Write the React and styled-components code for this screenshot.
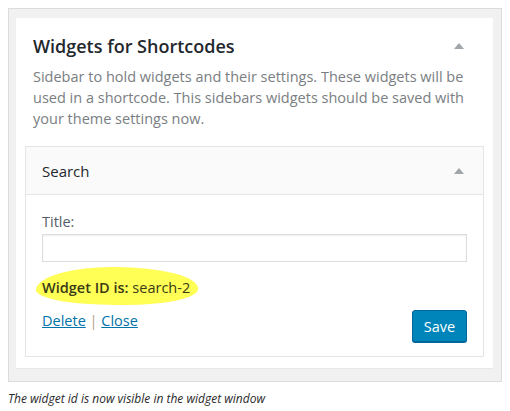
import React from "react";
import styled, { createGlobalStyle } from "styled-components";

const GlobalStyle = createGlobalStyle`
  body {
    margin: 8px;
    background: #ffffff;
    font-family: "Open Sans", "Liberation Sans", sans-serif;
  }
`;

const Frame = styled.div`
  width: 494px;
  box-sizing: border-box;
  border: 1px solid #dcdcdc;
  background: #f1f1f1;
  padding: 9px 8px 13px 7px;
`;

const Panel = styled.div`
  background: #ffffff;
  padding: 14px 9px 11px 9px;
  box-shadow: 0 1px 1px rgba(0, 0, 0, 0.04);
`;

const PanelHead = styled.div`
  display: flex;
  align-items: center;
  justify-content: space-between;
  padding: 0 20px 0 8px;
`;

const Title = styled.h2`
  margin: 0;
  font-size: 18px;
  line-height: 28px;
  font-weight: 600;
  color: #23282d;
`;

const Arrow = styled.span`
  width: 0;
  height: 0;
  border-left: 5px solid transparent;
  border-right: 5px solid transparent;
  border-bottom: 6px solid #a0a5aa;
`;

const Description = styled.p`
  margin: 6px 0 17px;
  padding: 0 8px;
  font-size: 14.5px;
  line-height: 21px;
  color: #7a7e82;
`;

const Widget = styled.div`
  border: 1px solid #e5e5e5;
  background: #ffffff;
`;

const WidgetHead = styled.div`
  display: flex;
  align-items: center;
  justify-content: space-between;
  height: 47px;
  padding: 0 19px 0 16px;
  background: #fafafa;
  border-bottom: 1px solid #e5e5e5;
`;

const WidgetName = styled.h3`
  margin: 0;
  font-size: 15px;
  font-weight: 400;
  color: #23282d;
`;

const WidgetBody = styled.div`
  padding: 17px 16px 14px;
`;

const Label = styled.label`
  display: block;
  font-size: 14.5px;
  line-height: 20px;
  color: #555d66;
`;

const Input = styled.input`
  display: block;
  width: 100%;
  box-sizing: border-box;
  height: 28px;
  margin: 2px 0 0;
  border: 1px solid #dddddd;
  box-shadow: inset 0 1px 2px rgba(0, 0, 0, 0.07);
  background: #ffffff;
  outline: none;
`;

const IdLine = styled.p`
  position: relative;
  margin: 16px 0 0;
  font-size: 14.5px;
  line-height: 20px;
  color: #3a3a18;
`;

const Highlight = styled.span`
  position: absolute;
  left: -6px;
  top: -11px;
  width: 162px;
  height: 38px;
  background: #ffff55;
  border-radius: 48% 52% 46% 50% / 62% 58% 42% 40%;
  z-index: 0;
`;

const IdText = styled.span`
  position: relative;
  z-index: 1;
  font-weight: ${(p) => (p.$strong ? 600 : 400)};
`;

const Footer = styled.div`
  display: flex;
  justify-content: space-between;
  align-items: flex-start;
  margin-top: 12px;
`;

const Links = styled.div`
  margin-top: 1px;
  font-size: 14.5px;
  line-height: 20px;
  color: #b9a48a;
`;

const Link = styled.a`
  color: #0073aa;
  text-decoration: underline;
`;

const SaveButton = styled.button`
  height: 32px;
  width: 55px;
  padding: 0;
  border: 1px solid #006799;
  border-radius: 3px;
  background: #0085ba;
  box-shadow: 0 1px 0 #006799;
  color: #ffffff;
  font-family: "Open Sans", "Liberation Sans", sans-serif;
  font-size: 14.5px;
`;

const Caption = styled.p`
  margin: 8px 0 0;
  font-size: 12px;
  font-style: italic;
  color: #2a2a2a;
`;

export default function App() {
  return (
    <>
      <GlobalStyle />
      <Frame>
        <Panel>
          <PanelHead>
            <Title>Widgets for Shortcodes</Title>
            <Arrow />
          </PanelHead>
          <Description>
            Sidebar to hold widgets and their settings. These widgets will be
            used in a shortcode. This sidebars widgets should be saved with
            your theme settings now.
          </Description>
          <Widget>
            <WidgetHead>
              <WidgetName>Search</WidgetName>
              <Arrow />
            </WidgetHead>
            <WidgetBody>
              <Label>Title:</Label>
              <Input type="text" />
              <IdLine>
                <Highlight />
                <IdText $strong>Widget ID is:</IdText> <IdText>search-2</IdText>
              </IdLine>
              <Footer>
                <Links>
                  <Link href="#">Delete</Link> | <Link href="#">Close</Link>
                </Links>
                <SaveButton>Save</SaveButton>
              </Footer>
            </WidgetBody>
          </Widget>
        </Panel>
      </Frame>
      <Caption>The widget id is now visible in the widget window</Caption>
    </>
  );
}
